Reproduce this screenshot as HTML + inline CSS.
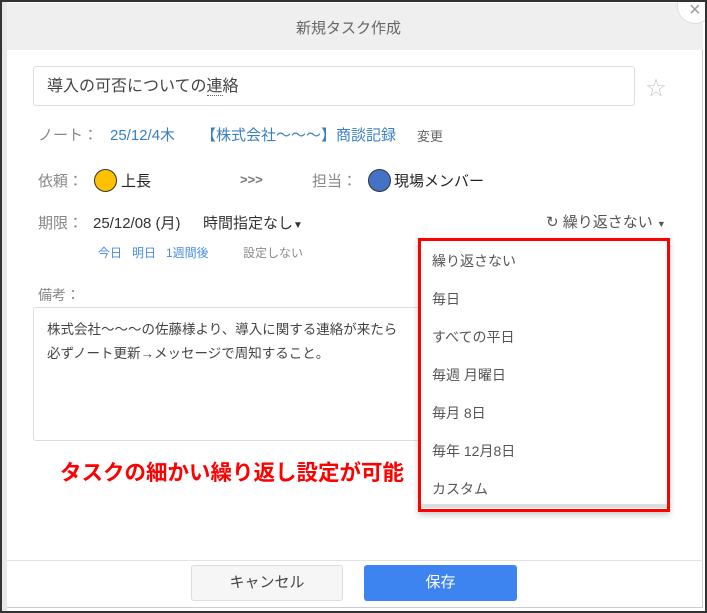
<!DOCTYPE html>
<html><head><meta charset="utf-8"><style>
*{margin:0;padding:0;box-sizing:border-box}
body{width:707px;height:613px;overflow:hidden;background:#fff;font-family:"Liberation Sans","Noto Sans CJK JP",sans-serif;position:relative}
.a{position:absolute;white-space:nowrap}
.frame{position:absolute;left:0;top:0;width:707px;height:613px;border:2px solid #333;border-left:2px solid #333}
.lg{color:#888}
.bl{color:#3a7fc4}
</style></head><body>
<div class="a" style="left:0;top:0;width:7px;height:613px;background:#e8e8e8"></div>
<div class="a" style="left:7px;top:3px;width:696px;height:605px;background:#fff;border-right:1px solid #ccc;border-bottom:1px solid #ccc"></div>
<div class="a" style="left:7px;top:3px;width:696px;height:47px;background:#efefef"></div>
<div class="a" style="left:296px;top:17px;font-size:15px;color:#666">新規タスク作成</div>
<div class="a" style="left:677px;top:-12px;width:36px;height:36px;border-radius:50%;background:#fff;border:1px solid #ddd"></div>
<div class="a" style="left:689px;top:-1px;font-size:20px;color:#999">×</div>

<div class="a" style="left:33px;top:66px;width:602px;height:40px;border:1px solid #ddd;border-radius:3px"></div>
<div class="a" style="left:47px;top:72px;font-size:16px;color:#444">導入の可否についての<span style="border-bottom:1px dotted #666">連</span>絡</div>
<div class="a" style="left:646px;top:72px;font-size:20px;color:#ccc">☆</div>

<div class="a lg" style="left:38px;top:124px;font-size:15px">ノート：</div>
<div class="a bl" style="left:110px;top:124px;font-size:15px">25/12/4木</div>
<div class="a bl" style="left:201px;top:124px;font-size:15px">【株式会社～～～】商談記録</div>
<div class="a" style="left:417px;top:126px;font-size:13px;color:#666">変更</div>

<div class="a lg" style="left:38px;top:170px;font-size:15px">依頼：</div>
<div class="a" style="left:94px;top:169px;width:23px;height:23px;border-radius:50%;background:#ffc000;border:1px solid #333"></div>
<div class="a" style="left:121px;top:170px;font-size:15px;color:#222">上長</div>
<div class="a" style="left:240px;top:172px;font-size:13px;color:#777;font-weight:bold">&gt;&gt;&gt;</div>
<div class="a lg" style="left:312px;top:170px;font-size:15px">担当：</div>
<div class="a" style="left:368px;top:169px;width:23px;height:23px;border-radius:50%;background:#4472c4;border:1px solid #333"></div>
<div class="a" style="left:394px;top:170px;font-size:15px;color:#222">現場メンバー</div>

<div class="a lg" style="left:38px;top:212px;font-size:15px">期限：</div>
<div class="a" style="left:93px;top:212px;font-size:15px;color:#333">25/12/08 (月)</div>
<div class="a" style="left:203px;top:212px;font-size:15px;color:#333">時間指定なし<span style="font-size:10px">▼</span></div>
<div class="a" style="left:546px;top:211px;font-size:15px;color:#555">↻ 繰り返さない <span style="font-size:9px">▼</span></div>

<div class="a" style="left:98px;top:244px;font-size:12px;color:#4a8be0">今日 &nbsp; 明日 &nbsp; 1週間後</div>
<div class="a" style="left:243px;top:244px;font-size:12px;color:#888">設定しない</div>

<div class="a lg" style="left:38px;top:285px;font-size:14px">備考：</div>
<div class="a" style="left:33px;top:307px;width:420px;height:134px;border:1px solid #ddd;border-radius:3px"></div>
<div class="a" style="left:47px;top:318px;font-size:13.5px;color:#444;line-height:24px">株式会社～～～の佐藤様より、導入に関する連絡が来たら<br>必ずノート更新→メッセージで周知すること。</div>

<div class="a" style="left:60px;top:456px;font-size:21.5px;color:#f00;font-weight:bold">タスクの細かい繰り返し設定が可能</div>

<div class="a" style="left:418px;top:238px;width:252px;height:274px;border:3px solid #f00;background:#fff;box-shadow:0 3px 6px rgba(0,0,0,.2)"></div>
<div class="a" style="left:421px;top:504px;width:246px;height:4px;background:#ddd"></div>
<div class="a" style="left:432px;top:242px;font-size:14px;color:#555;line-height:38px">繰り返さない<br>毎日<br>すべての平日<br>毎週 月曜日<br>毎月 8日<br>毎年 12月8日<br>カスタム</div>

<div class="a" style="left:7px;top:560px;width:696px;height:1px;background:#e2e2e2"></div>
<div class="a" style="left:191px;top:565px;width:152px;height:36px;background:#f6f6f6;border:1px solid #ddd;border-radius:3px;text-align:center;line-height:34px;font-size:15px;color:#444">キャンセル</div>
<div class="a" style="left:364px;top:565px;width:153px;height:36px;background:#3d84f0;border-radius:3px;text-align:center;line-height:36px;font-size:15px;color:#fff">保存</div>

<div class="frame"></div>
</body></html>
